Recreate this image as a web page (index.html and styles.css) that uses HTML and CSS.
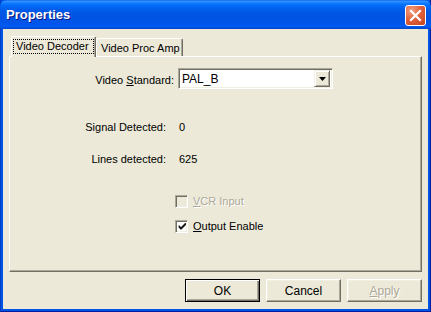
FILE: index.html
```html
<!DOCTYPE html>
<html>
<head>
<meta charset="utf-8">
<link rel="stylesheet" href="styles.css">
</head>
<body>
<div class="window">
  <div class="titlebar">
    <span class="title">Properties</span>
    <div class="close">
      <svg width="19" height="19" viewBox="0 0 19 19"><path d="M5 5L14 14M14 5L5 14" stroke="#fff" stroke-width="2.2" stroke-linecap="square"/></svg>
    </div>
  </div>
  <div class="client">
    <div class="tabstrip">
      <div class="tab active"><span class="focus">Video Decoder</span></div>
      <div class="tab">Video Proc Amp</div>
    </div>
    <div class="panel">
      <div class="row std">
        <span class="lbl w1">Video <u>S</u>tandard:</span>
        <div class="combo">
          <span class="combo-text">PAL_B</span>
          <div class="drop"><svg width="7" height="4" viewBox="0 0 7 4"><path d="M0 0H7L3.5 4Z" fill="#000"/></svg></div>
        </div>
      </div>
      <div class="row info sig"><span class="lbl w2">Signal Detected:</span><span class="val">0</span></div>
      <div class="row info lines"><span class="lbl w2">Lines detected:</span><span class="val">625</span></div>
      <div class="row chk vcr">
        <span class="box disabled"></span>
        <span class="chk-label disabled-text"><u>V</u>CR Input</span>
      </div>
      <div class="row chk out">
        <span class="box"><svg width="9" height="9" viewBox="0 0 9 9"><path d="M1 3.5L3 5.5L7.5 1V3L3 7.5L1 5.5Z" fill="#000" stroke="#000" stroke-width="0.6"/></svg></span>
        <span class="chk-label"><u>O</u>utput Enable</span>
      </div>
    </div>
    <div class="buttons">
      <div class="btn default">OK</div>
      <div class="btn">Cancel</div>
      <div class="btn disabled-text"><u>A</u>pply</div>
    </div>
  </div>
</div>
</body>
</html>
```

FILE: styles.css
```css
html, body {
  margin: 0;
  padding: 0;
  background: #ECE9D8;
}
.window {
  width: 431px;
  height: 312px;
  box-sizing: border-box;
  display: flex;
  flex-direction: column;
  background: #0054E3;
  border-left: 1px solid #0041C8;
  border-right: 1px solid #001EA0;
  border-bottom: 1px solid #001EA0;
  font-family: "Liberation Sans", Arial, sans-serif;
  font-size: 11px;
  color: #000;
}
.titlebar {
  height: 29px;
  flex: none;
  display: flex;
  align-items: center;
  padding-left: 6px;
  margin: 0 -1px;
  background: linear-gradient(to bottom, #0058EE 0px, #3A93FF 1px, #288EFF 2px, #127DFF 3px, #036FFC 5px, #0262EE 8px, #0057E5 12px, #0054E3 18px, #0055EB 24px, #005BF5 26px, #0251D8 28px, #0041C8 29px);
  border-radius: 7px 7px 0 0;
}
.title {
  color: #fff;
  font-weight: bold;
  font-size: 13px;
  text-shadow: 1px 1px 0 #0A1883;
}
.close {
  margin-left: auto;
  margin-right: 5px;
  margin-top: 1px;
  width: 21px;
  height: 21px;
  box-sizing: border-box;
  border: 1px solid #fff;
  border-radius: 3px;
  background: radial-gradient(circle at 30% 25%, #F0A285 0%, #E2643F 45%, #C4401B 100%);
  display: flex;
  align-items: center;
  justify-content: center;
}
.close svg { display: block; }
.client {
  flex: 1;
  margin: 0 2px 2px 2px;
  background: #ECE9D8;
  padding: 7px 6px 7px 6px;
  display: flex;
  flex-direction: column;
}
.tabstrip {
  height: 20px;
  display: flex;
  align-items: flex-end;
  padding-left: 2px;
}
.tab {
  height: 18px;
  box-sizing: border-box;
  border-top: 1px solid #fff;
  border-left: 1px solid #fff;
  border-right: 1px solid #716F64;
  box-shadow: inset -1px 0 0 #ACA899;
  border-radius: 2px 2px 0 0;
  padding: 0 2px 0 4px;
  display: flex;
  align-items: center;
  background: #ECE9D8;
  width: 87px;
  white-space: nowrap;
  overflow: hidden;
}
.tab.active {
  height: 21px;
  width: 85px;
  margin-bottom: -1px;
  position: relative;
  z-index: 1;
  padding: 2px;
  align-items: flex-start;
}
.focus {
  display: block;
  outline: 1px dotted #000;
  outline-offset: 0;
  width: 77px;
  height: 13px;
  line-height: 13px;
  padding-left: 2px;
  margin-top: 1px;
}
.panel {
  height: 216px;
  box-sizing: border-box;
  border-top: 1px solid #fff;
  border-left: 1px solid #fff;
  border-right: 1px solid #716F64;
  border-bottom: 1px solid #716F64;
  box-shadow: inset -1px -1px 0 #ACA899;
  padding-top: 11px;
  display: flex;
  flex-direction: column;
}
.row {
  display: flex;
  align-items: center;
}
.lbl {
  text-align: right;
  flex: none;
}
.w1 { width: 164px; }
.w2 { width: 156px; }
.std { height: 21px; }
.std .lbl { margin-right: 4px; padding-top: 2px; }
.combo {
  width: 155px;
  height: 21px;
  box-sizing: border-box;
  background: #fff;
  border-top: 1px solid #ACA899;
  border-left: 1px solid #ACA899;
  border-right: 1px solid #fff;
  border-bottom: 1px solid #fff;
  box-shadow: inset 1px 1px 0 #716F64, inset -1px -1px 0 #F1EFE2;
  display: flex;
  align-items: center;
  padding: 2px 2px 2px 3px;
}
.combo-text {
  flex: 1;
  font-size: 12px;
}
.drop {
  width: 16px;
  height: 17px;
  box-sizing: border-box;
  background: #ECE9D8;
  border-top: 1px solid #F1EFE2;
  border-left: 1px solid #F1EFE2;
  border-right: 1px solid #716F64;
  border-bottom: 1px solid #716F64;
  box-shadow: inset 1px 1px 0 #fff, inset -1px -1px 0 #ACA899;
  display: flex;
  align-items: center;
  justify-content: center;
}
.drop svg { display: block; margin-top: 1px; }
.info { height: 13px; line-height: 13px; }
.info .val { margin-left: 13px; }
.sig { margin-top: 32px; }
.lines { margin-top: 19px; }
.chk { height: 13px; padding-left: 165px; }
.vcr { margin-top: 29px; }
.out { margin-top: 12px; }
.box {
  width: 13px;
  height: 13px;
  box-sizing: border-box;
  flex: none;
  background: #fff;
  border-top: 1px solid #ACA899;
  border-left: 1px solid #ACA899;
  border-right: 1px solid #fff;
  border-bottom: 1px solid #fff;
  box-shadow: inset 1px 1px 0 #716F64, inset -1px -1px 0 #F1EFE2;
  display: flex;
  align-items: center;
  justify-content: center;
}
.box.disabled { background: #ECE9D8; }
.box svg { display: block; margin-left: 1px; }
.chk-label { margin-left: 5px; line-height: 13px; }
.disabled-text {
  color: #ACA899;
  text-shadow: 1px 1px 0 #fff;
}
.buttons {
  margin-top: 7px;
  display: flex;
  justify-content: flex-end;
  gap: 6px;
}
.btn {
  width: 75px;
  height: 23px;
  box-sizing: border-box;
  border-top: 1px solid #fff;
  border-left: 1px solid #fff;
  border-right: 1px solid #716F64;
  border-bottom: 1px solid #716F64;
  box-shadow: inset -1px -1px 0 #ACA899, inset 1px 1px 0 #F1EFE2;
  display: flex;
  align-items: center;
  justify-content: center;
  font-size: 12px;
}
.btn.default {
  border: 1px solid #000;
  box-shadow: inset 1px 1px 0 #fff, inset -1px -1px 0 #716F64, inset -2px -2px 0 #ACA899;
}
```
